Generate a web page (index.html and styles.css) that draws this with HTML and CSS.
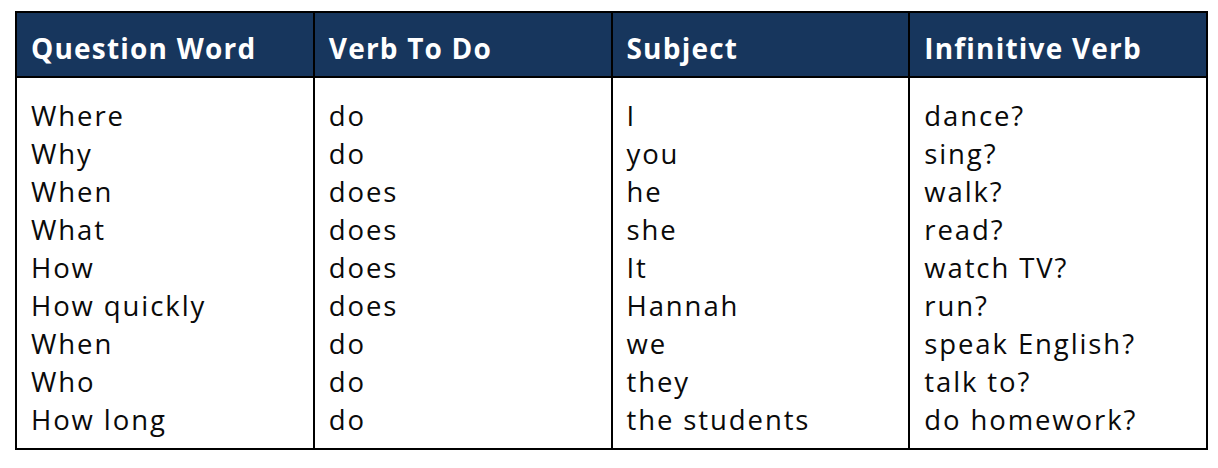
FILE: index.html
```html
<!DOCTYPE html>
<html>
<head>
<meta charset="utf-8">
<link rel="stylesheet" href="styles.css">
</head>
<body>
<table class="grammar">
  <thead>
    <tr>
      <th>Question Word</th>
      <th>Verb To Do</th>
      <th>Subject</th>
      <th>Infinitive Verb</th>
    </tr>
  </thead>
  <tbody>
    <tr>
      <td>Where<br>Why<br>When<br>What<br>How<br>How quickly<br>When<br>Who<br>How long</td>
      <td>do<br>do<br>does<br>does<br>does<br>does<br>do<br>do<br>do</td>
      <td>I<br>you<br>he<br>she<br>It<br>Hannah<br>we<br>they<br>the students</td>
      <td>dance?<br>sing?<br>walk?<br>read?<br>watch TV?<br>run?<br>speak English?<br>talk to?<br>do homework?</td>
    </tr>
  </tbody>
</table>
</body>
</html>
```

FILE: styles.css
```css
html, body {
  margin: 0;
  padding: 0;
  background: #ffffff;
}

body {
  padding: 11px 10px 0 15px;
  font-family: "Open Sans", "Lato", sans-serif;
}

.grammar {
  border-collapse: collapse;
  table-layout: fixed;
  width: 1193px;
}

.grammar th,
.grammar td {
  border: 2px solid #000000;
  text-align: left;
  vertical-align: top;
  width: 25%;
}

.grammar th {
  background: #17365d;
  color: #ffffff;
  font-weight: 700;
  font-size: 28px;
  height: 65px;
  box-sizing: border-box;
  padding: 6px 14px 0;
  vertical-align: middle;
  letter-spacing: 1.2px;
}

.grammar td {
  color: #0a0a0a;
  font-size: 27.5px;
  line-height: 38px;
  letter-spacing: 1.9px;
  padding: 19px 14px 9px;
}
```
